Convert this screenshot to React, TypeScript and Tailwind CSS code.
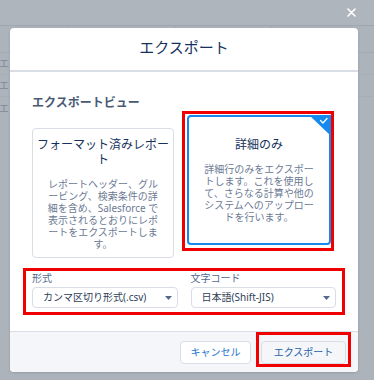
import React from 'react';

const leftDesc = ['レポートヘッダー、グル', 'ービング、検索条件の詳', '細を含め、Salesforce で', '表示されるとおりにレポ', 'ートをエクスポートしま', 'す。'];
const rightDesc = ['詳細行のみをエクスポー', 'トします。これを使用し', 'て、さらなる計算や他の', 'システムへのアップロー', 'ドを行います。'];

function Caret() {
  return (
    <svg width="7" height="4" viewBox="0 0 7 4" className="shrink-0">
      <path d="M0 0 L7 0 L3.5 4 Z" fill="#54698d" />
    </svg>
  );
}

function Lines({ lines, className }: { lines: string[]; className: string }) {
  return (
    <div className={className}>
      {lines.map((l) => (
        <div key={l} className="whitespace-nowrap">
          {l}
        </div>
      ))}
    </div>
  );
}

function Select({ label, value }: { label: string; value: string }) {
  return (
    <div className="flex w-[146px] flex-col">
      <span className="text-[10px] leading-[14px] text-[#54698d]">{label}</span>
      <div className="mt-[2px] flex h-[21px] items-center justify-between rounded-[4px] border border-[#d8dde6] bg-white pl-[10px] pr-[5px] text-[10px] text-[#2e3d56]">
        <span>{value}</span>
        <Caret />
      </div>
    </div>
  );
}

export default function App() {
  return (
    <div
      lang="ja"
      className="relative h-[380px] w-[374px] overflow-hidden bg-[#adb3ba] font-['Noto_Sans','Noto_Sans_CJK_JP',sans-serif]"
    >
      {/* page behind the modal */}
      <div className="flex h-[26px] items-center justify-end border-b border-[#9ea5ae] bg-[#afb5bc] pr-[18px]">
        <svg width="9" height="9" viewBox="0 0 9 9">
          <path d="M1 1 L8 8 M8 1 L1 8" stroke="#ffffff" strokeWidth="1.6" strokeLinecap="round" />
        </svg>
      </div>
      <div className="flex h-[27px] border-b border-[#a2a9b1]">
        <div className="w-[68px] border-r border-[#a2a9b1]" />
        <div className="w-[108px] border-r border-[#a2a9b1]" />
        <div className="w-[96px] border-r border-[#a2a9b1]" />
      </div>
      {[0, 1, 2].map((i) => (
        <div key={i} className={`flex h-[22px] items-center ${i < 2 ? 'border-b border-[#a6adb5]' : ''}`}>
          <span className="-ml-[1px] text-[10px] text-[#7f8997]">エラー</span>
        </div>
      ))}

      {/* modal */}
      <div className="absolute left-[10px] top-[28px] flex h-[344px] w-[348px] flex-col overflow-hidden rounded-[4px] bg-white shadow-sm">
        <div className="flex h-[44px] shrink-0 justify-center border-b-2 border-[#d8dde6] pt-[9px]">
          <span className="text-[15px] leading-[20px] text-[#16325c]">エクスポート</span>
        </div>

        <div className="flex h-[259px] shrink-0 flex-col px-[22px] pt-[23px]">
          <span className="text-[12px] font-bold leading-[16px] text-[#4a5a75]">エクスポートビュー</span>

          <div className="mt-[4px] flex items-start gap-[13px]">
            <div className="mt-[13px] flex h-[130px] w-[142px] flex-col items-center justify-center rounded-[4px] border border-[#d8dde6] px-[3px] text-center">
              <Lines lines={['フォーマット済みレポー', 'ト']} className="text-[12px] leading-[15px] text-[#16325c]" />
              <Lines lines={leftDesc} className="mt-[11px] text-[10px] leading-[12px] text-[#6b7a94]" />
            </div>

            <div className="relative flex h-[130px] w-[144px] flex-col items-center justify-center rounded-[4px] border-2 border-[#1589ee] px-[3px] text-center">
              <svg width="22" height="21" viewBox="0 0 22 21" className="absolute -right-[2px] -top-[2px]">
                <path d="M0 0 L22 0 L22 21 Z" fill="#1589ee" />
                <path d="M11.5 5.5 L14 8 L18 3.5" stroke="#ffffff" strokeWidth="1.3" fill="none" strokeLinecap="round" strokeLinejoin="round" />
              </svg>
              <span className="text-[12px] leading-[15px] text-[#16325c]">詳細のみ</span>
              <Lines lines={rightDesc} className="mt-[11px] text-[10px] leading-[12px] text-[#6b7a94]" />
            </div>
          </div>

          <div className="mt-[13px] flex gap-[13px]">
            <Select label="形式" value="カンマ区切り形式(.csv)" />
            <Select label="文字コード" value="日本語(Shift-JIS)" />
          </div>
        </div>

        <div className="flex h-[41px] shrink-0 items-center justify-end gap-[10px] border-t border-[#d8dde6] bg-[#f4f6f9] pr-[12px]">
          <button className="flex h-[23px] w-[71px] items-center justify-center rounded-[4px] border border-[#d8dde6] bg-white text-[10px] text-[#1b74d0]">
            キャンセル
          </button>
          <button className="flex h-[23px] w-[85px] items-center justify-center rounded-[4px] border border-[#d8dde6] bg-[#f4f6f9] text-[10px] text-[#1e5fa8]">
            エクスポート
          </button>
        </div>
      </div>

      {/* red annotation boxes */}
      <div className="absolute left-[182px] top-[111px] h-[140px] w-[152px] border-[3px] border-[#f00000]" />
      <div className="absolute left-[23px] top-[268px] h-[47px] w-[322px] border-[3px] border-[#f00000]" />
      <div className="absolute left-[256px] top-[332px] h-[35px] w-[95px] border-[3px] border-[#f00000]" />
    </div>
  );
}
